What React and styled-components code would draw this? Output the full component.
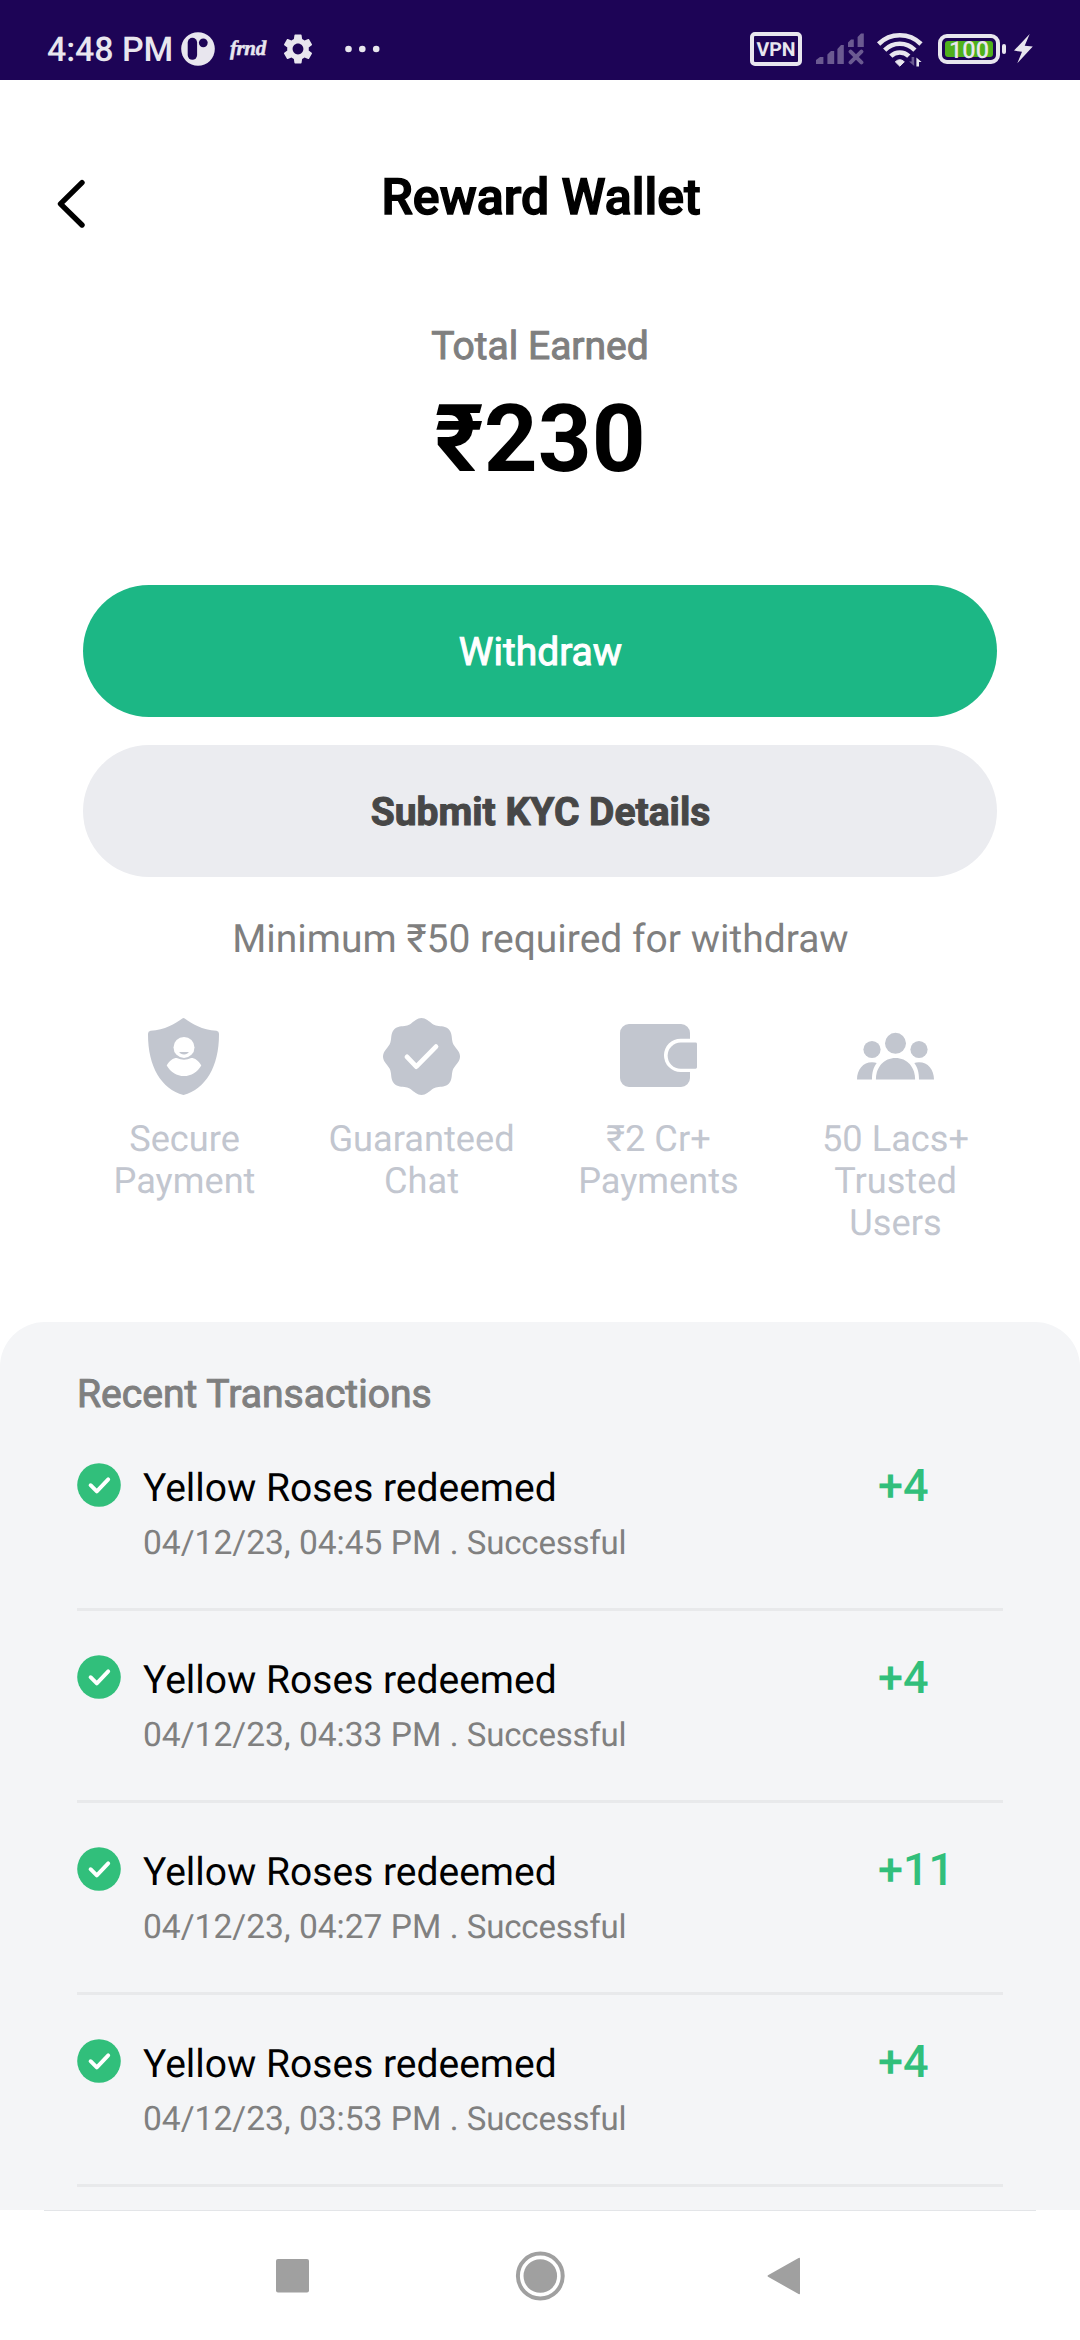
import React from "react";
import styled, { createGlobalStyle } from "styled-components";
import { MdSettings } from "react-icons/md";

const GlobalStyle = createGlobalStyle`
  * { box-sizing: border-box; }
  body {
    margin: 0;
    background: #ffffff;
    font-family: Roboto, "Noto Sans", sans-serif;
    text-rendering: geometricPrecision;
  }
  h1, h2, p { margin: 0; }
`;

const light = "#e8e6ee";
const purple = "#1d0456";
const muted = "#c2c6cf";
const green = "#31bf7b";

const Screen = styled.div`
  width: 1080px;
  height: 2340px;
  display: flex;
  flex-direction: column;
  overflow: hidden;
  background: #ffffff;
`;

/* ---------- status bar ---------- */

const StatusBar = styled.header`
  flex: none;
  height: 80px;
  padding: 18px 47px 0;
  display: flex;
  justify-content: space-between;
  background: ${purple};
  color: ${light};
`;

const StatusGroup = styled.div`
  display: flex;
  align-items: center;
`;

const Clock = styled.span`
  width: 134px;
  padding-top: 2px;
  font-size: 34px;
  line-height: 40px;
  font-weight: 500;
  letter-spacing: -0.1px;
  white-space: nowrap;
`;

const BrandMark = styled.span`
  width: 52px;
  padding: 0 0 2px 15px;
  font-family: "Liberation Serif", serif;
  font-size: 21px;
  line-height: 24px;
  font-style: italic;
  font-weight: 700;
  letter-spacing: -0.4px;
  -webkit-text-stroke: 0.5px ${light};
`;

const Gear = styled(MdSettings)`
  width: 36px;
  height: 36px;
  margin: 0 29px 0 13px;
`;

const VpnTag = styled.span`
  width: 52px;
  height: 34px;
  margin-right: 14px;
  border: 4px solid ${light};
  border-radius: 5px;
  font-size: 19.5px;
  line-height: 27px;
  font-weight: 700;
  text-align: center;
`;

const WifiIcon = styled.svg`
  width: 48px;
  height: 36px;
  margin: 0 14px 0 12px;
`;

const Battery = styled.span`
  width: 62px;
  height: 30px;
  padding: 3px;
  border: 4px solid ${light};
  border-radius: 9px;
`;

const BatteryLevel = styled.span`
  display: flex;
  align-items: center;
  justify-content: center;
  height: 16px;
  border-radius: 3px;
  background: #4fb01c;
  font-size: 23.5px;
  font-weight: 500;
  line-height: 16px;
  padding-top: 1px;
`;

const BatteryTip = styled.span`
  width: 4px;
  height: 10px;
  margin: 0 8px 0 2px;
  border-radius: 2px;
  background: ${light};
`;

/* ---------- wallet header ---------- */

const TitleBar = styled.div`
  flex: none;
  display: grid;
  grid-template-columns: 1fr auto 1fr;
  padding: 88px 53px 0 55px;
`;

const BackIcon = styled.svg`
  width: 32px;
  height: 50px;
  margin-top: 10px;
`;

const Title = styled.h1`
  padding-top: 1px;
  font-size: 50px;
  line-height: 59px;
  font-weight: 500;
  -webkit-text-stroke: 1.4px #000000;
`;

const Summary = styled.section`
  flex: none;
  margin-top: 95px;
  text-align: center;
`;

const SummaryLabel = styled.p`
  font-size: 39px;
  line-height: 46px;
  color: #7f7f7f;
  -webkit-text-stroke: 1px #7f7f7f;
`;

const SummaryAmount = styled.p`
  margin-top: 15px;
  font-size: 94px;
  line-height: 110px;
  font-weight: 700;
`;

const Actions = styled.section`
  flex: none;
  margin-top: 91px;
  padding: 0 83px;
  display: flex;
  flex-direction: column;
  gap: 28px;
`;

const ActionButton = styled.button`
  height: 132px;
  padding: 2px 0 0 1px;
  border: 0;
  border-radius: 66px;
  font-family: inherit;
  font-size: 39px;
  line-height: 46px;
  text-rendering: inherit;
  font-weight: ${(p) => (p.$primary ? 400 : 700)};
  color: ${(p) => (p.$primary ? "#ffffff" : "#474747")};
  background: ${(p) => (p.$primary ? "#1cb785" : "#ebecf0")};
  -webkit-text-stroke: 1px currentColor;
`;

const Note = styled.p`
  flex: none;
  margin-top: 39px;
  padding-left: 1px;
  font-size: 39px;
  line-height: 46px;
  text-align: center;
  color: #7f7f7f;
`;

/* ---------- trust features ---------- */

const Features = styled.section`
  flex: none;
  display: grid;
  grid-template-columns: repeat(4, 237px);
  justify-content: center;
  margin-top: 56px;
  height: 226px;
`;

const Feature = styled.div`
  display: flex;
  flex-direction: column;
  align-items: center;
  color: ${muted};
`;

const FeatureIcon = styled.svg`
  width: 77px;
  height: 77px;
  fill: currentColor;
`;

const FeatureLabel = styled.p`
  width: 190px;
  margin-top: 23px;
  font-size: 36.2px;
  line-height: 42px;
  text-align: center;
`;

/* ---------- transactions ---------- */

const Panel = styled.section`
  flex: 1;
  min-height: 0;
  margin-top: 78px;
  padding: 49px 77px 0;
  border-radius: 45px 45px 0 0;
  background: #f4f5f7;
  overflow: hidden;
`;

const PanelTitle = styled.h2`
  margin-bottom: 2px;
  font-size: 39.1px;
  line-height: 46px;
  font-weight: 400;
  color: #7f7f7f;
  -webkit-text-stroke: 1px #7f7f7f;
`;

const Transaction = styled.article`
  height: 192px;
  display: grid;
  grid-template-columns: 44px 1fr 125px;
  column-gap: 22px;
  align-items: start;
  border-bottom: 3px solid #e8e9eb;
`;

const CheckIcon = styled.svg`
  width: 44px;
  height: 44px;
  margin-top: 44px;
`;

const Details = styled.div`
  padding-top: 46px;
`;

const Name = styled.p`
  font-size: 39px;
  line-height: 46px;
  color: #000000;
`;

const Meta = styled.p`
  margin-top: 13px;
  font-size: 33.6px;
  line-height: 40px;
  color: #808080;
`;

const State = styled.span`
  font-size: 33px;
  letter-spacing: -0.2px;
`;

const Amount = styled.p`
  margin-top: 41px;
  font-size: 45px;
  line-height: 52px;
  font-weight: 500;
  color: ${green};
`;

/* ---------- system navigation ---------- */

const NavBar = styled.nav`
  flex: none;
  height: 130px;
  background: #ffffff;
`;

const NavLine = styled.div`
  height: 1px;
  margin: 0 44px;
  background: #e3e5e8;
`;

const NavKeys = styled.div`
  height: 129px;
  padding: 0 169px;
  display: grid;
  grid-template-columns: repeat(3, 1fr);
  place-items: center;
`;

const NavIcon = styled.svg`
  width: 50px;
  height: 50px;
  fill: #a0a0a0;
`;

/* A round seal with eight soft lobes. */
const sealPath =
  Array.from({ length: 160 }, (_, i) => {
    const a = (i / 160) * Math.PI * 2;
    const r = 36.3 + 2.2 * Math.cos(8 * a);
    const x = (38.5 + r * Math.cos(a)).toFixed(2);
    const y = (38.5 + r * Math.sin(a)).toFixed(2);
    return `${i ? "L" : "M"}${x} ${y}`;
  }).join("") + "Z";

const ShieldIcon = () => (
  <FeatureIcon viewBox="0 0 77 77">
    <path d="M36.3 .4Q37.5 -.4 38.7 .4C46 6 56 11.5 70.5 12.8Q73 13.2 73 15.8C73.2 48 60 71 37.5 77C15 71 1.8 48 2 15.8Q2 13.2 4.5 12.8C19 11.5 29 6 36.3 .4Z" />
    <circle cx="38" cy="29.4" r="10.5" fill="#fff" />
    <path d="M33.2 34H42.8C42 35.6 40.3 36.5 38 36.5S34 35.6 33.2 34Z" />
    <path
      fill="#fff"
      d="M20.7 47.4C23.5 42.6 27 40 30.8 40Q38 43.6 45.2 40C49 40 52.5 42.6 55.3 47.4C51.5 54 45.2 58 38 58S24.5 54 20.7 47.4Z"
    />
  </FeatureIcon>
);

const SealIcon = () => (
  <FeatureIcon viewBox="0 0 77 77">
    <path d={sealPath} />
    <path
      d="M24 38.9L33.3 48.6L53 28.6"
      fill="none"
      stroke="#fff"
      strokeWidth="4.8"
      strokeLinecap="round"
      strokeLinejoin="round"
    />
  </FeatureIcon>
);

const WalletIcon = () => (
  <FeatureIcon viewBox="0 0 77 77">
    <path d="M9 6H61A9 9 0 0 1 70 15V20.7H60.6A16.65 16.65 0 0 0 60.6 54H70V60A9 9 0 0 1 61 69H9A9 9 0 0 1 0 60V15A9 9 0 0 1 9 6Z" />
    <path d="M60.7 24.6H75.6Q77 24.6 77 26V49.3Q77 50.7 75.6 50.7H60.7A13.05 13.05 0 0 1 60.7 24.6Z" />
  </FeatureIcon>
);

const UsersIcon = () => (
  <FeatureIcon viewBox="0 0 77 77">
    <circle cx="38.5" cy="25.3" r="10.5" />
    <circle cx="15" cy="31.5" r="8.6" />
    <circle cx="62" cy="31.5" r="8.6" />
    <path d="M18.9 61.5C18.9 49 27 40 38.5 40S58.1 49 58.1 61.5Z" />
    <path d="M0 61.5C0 51.5 6 44.2 15 44.2Q18 44.2 19.7 45C16.4 49.5 15 54 15 61.5Z" />
    <path d="M77 61.5C77 51.5 71 44.2 62 44.2Q59 44.2 57.3 45C60.6 49.5 62 54 62 61.5Z" />
  </FeatureIcon>
);

const features = [
  { icon: <ShieldIcon />, label: "Secure Payment" },
  { icon: <SealIcon />, label: "Guaranteed Chat" },
  { icon: <WalletIcon />, label: "₹2 Cr+ Payments" },
  { icon: <UsersIcon />, label: "50 Lacs+ Trusted Users" },
];

const transactions = [
  { time: "04:45 PM", amount: "+4" },
  { time: "04:33 PM", amount: "+4" },
  { time: "04:27 PM", amount: "+11" },
  { time: "03:53 PM", amount: "+4" },
];

export default function App() {
  return (
    <Screen>
      <GlobalStyle />
      <StatusBar>
        <StatusGroup>
          <Clock>4:48 PM</Clock>
          <svg width="34" height="34" viewBox="0 0 34 34">
            <circle cx="17" cy="17" r="16.8" fill={light} />
            <rect x="6.7" y="5.8" width="9.4" height="22" rx="4.7" fill={purple} />
            <circle cx="22.3" cy="10.8" r="4.4" fill={purple} />
          </svg>
          <BrandMark>frnd</BrandMark>
          <Gear />
          <svg width="36" height="8" viewBox="0 0 36 8" fill={light}>
            <circle cx="3.5" cy="4" r="3.3" />
            <circle cx="17.3" cy="4" r="3.3" />
            <circle cx="31.2" cy="4" r="3.3" />
          </svg>
        </StatusGroup>
        <StatusGroup>
          <VpnTag>VPN</VpnTag>
          <svg width="48" height="32" viewBox="0 0 48 32" fill="#6b5a91">
            <path d="M0 31V27L4 24H7.4V31ZM11.4 31V21.4L15 18H18.2V31ZM21.4 31V16L25 12H27.8V31ZM32 14V9.6L35 6.4H37.8V14ZM41.6 14V4L45 .4H47.8V14Z" />
            <path d="M34.6 18.6L45.4 29.4M45.4 18.6L34.6 29.4" stroke="#6b5a91" strokeWidth="4" strokeLinecap="round" />
          </svg>
          <WifiIcon viewBox="0 0 48 36">
            <g fill="none" stroke={light} strokeWidth="4.6">
              <path d="M2.6 13A30 30 0 0 1 45 13" />
              <path d="M8.7 19.1A21.3 21.3 0 0 1 38.9 19.1" />
              <path d="M14.8 25.2A12.8 12.8 0 0 1 32.8 25.2" />
            </g>
            <path d="M23.8 35.2L19.3 30.8Q23.8 26.6 28.3 30.8Z" fill={light} stroke={light} strokeLinejoin="round" />
            <path d="M38.2 26V35L33 30.5H35.6V26Z" fill="#6b5a91" />
            <path d="M40.4 35.5V26.4L45.6 31H43V35.5Z" fill={light} />
          </WifiIcon>
          <Battery>
            <BatteryLevel>100</BatteryLevel>
          </Battery>
          <BatteryTip />
          <svg width="19" height="30" viewBox="0 0 19 30" fill={light}>
            <path d="M15.7 0L0 16.6L8 17.8L3.3 29.3L18.8 12.6L10.7 11.8Z" />
          </svg>
        </StatusGroup>
      </StatusBar>

      <TitleBar>
        <BackIcon viewBox="0 0 32 50">
          <path
            d="M27 4.6L5.5 25.8L27 47"
            fill="none"
            stroke="#000"
            strokeWidth="5.4"
            strokeLinecap="round"
            strokeLinejoin="round"
          />
        </BackIcon>
        <Title>Reward Wallet</Title>
      </TitleBar>

      <Summary>
        <SummaryLabel>Total Earned</SummaryLabel>
        <SummaryAmount>₹230</SummaryAmount>
      </Summary>

      <Actions>
        <ActionButton $primary>Withdraw</ActionButton>
        <ActionButton>Submit KYC Details</ActionButton>
      </Actions>
      <Note>Minimum ₹50 required for withdraw</Note>

      <Features>
        {features.map((f) => (
          <Feature key={f.label}>
            {f.icon}
            <FeatureLabel>{f.label}</FeatureLabel>
          </Feature>
        ))}
      </Features>

      <Panel>
        <PanelTitle>Recent Transactions</PanelTitle>
        {transactions.map((t) => (
          <Transaction key={t.time}>
            <CheckIcon viewBox="0 0 44 44">
              <circle cx="22" cy="22" r="21.8" fill={green} />
              <path
                d="M13.6 22.2L19.8 28.4L31.2 16.4"
                fill="none"
                stroke="#fff"
                strokeWidth="3.9"
                strokeLinecap="round"
                strokeLinejoin="round"
              />
            </CheckIcon>
            <Details>
              <Name>Yellow Roses redeemed</Name>
              <Meta>
                04/12/23, {t.time} . <State>Successful</State>
              </Meta>
            </Details>
            <Amount>{t.amount}</Amount>
          </Transaction>
        ))}
      </Panel>

      <NavBar>
        <NavLine />
        <NavKeys>
          <NavIcon viewBox="0 0 50 50">
            <rect x="8" y="8" width="33" height="33.4" rx="2" />
          </NavIcon>
          <NavIcon viewBox="0 0 50 50">
            <circle cx="25.3" cy="25" r="16.8" />
            <circle cx="25.3" cy="25" r="22.4" fill="none" stroke="#a0a0a0" strokeWidth="4" />
          </NavIcon>
          <NavIcon viewBox="0 0 50 50">
            <path d="M6 24.3Q5.2 25 6 25.8L36.6 43Q38 43.8 38 42.2V8Q38 6.2 36.6 7Z" />
          </NavIcon>
        </NavKeys>
      </NavBar>
    </Screen>
  );
}
